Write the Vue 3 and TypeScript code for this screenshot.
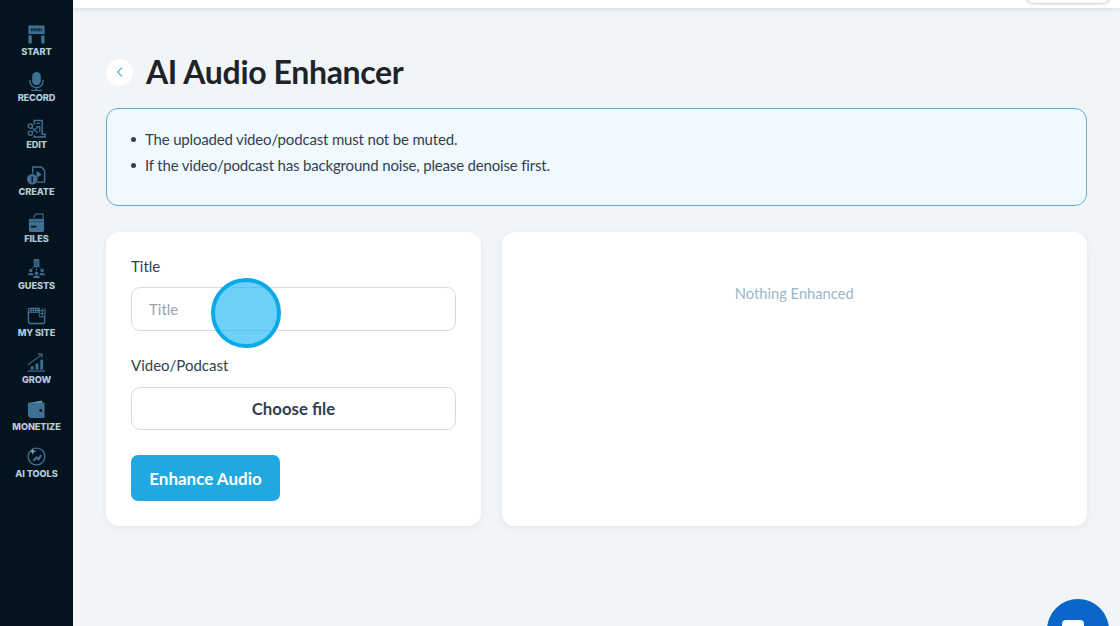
<script setup lang="ts">
interface NavItem { label: string; icon: string }
const nav: NavItem[] = [
  { label: 'START', icon: 'start' },
  { label: 'RECORD', icon: 'record' },
  { label: 'EDIT', icon: 'edit' },
  { label: 'CREATE', icon: 'create' },
  { label: 'FILES', icon: 'files' },
  { label: 'GUESTS', icon: 'guests' },
  { label: 'MY SITE', icon: 'site' },
  { label: 'GROW', icon: 'grow' },
  { label: 'MONETIZE', icon: 'monetize' },
  { label: 'AI TOOLS', icon: 'tools' },
]
</script>

<template>
  <div class="page">
    <aside class="sidebar">
      <div v-for="item in nav" :key="item.label" class="nav-item">
        <svg class="nav-icon" viewBox="0 0 20 20" width="20" height="20">
          <template v-if="item.icon === 'start'">
            <rect x="1.500" y="0.500" width="17" height="9" fill="#3f7093" />
            <rect x="1.500" y="11" width="3.500" height="8.500" fill="#3f7093" />
            <rect x="15" y="11" width="3.500" height="8.500" fill="#3f7093" />
            <path d="M4 5h12" stroke="#0f2c40" stroke-width="3" stroke-dasharray="2 .6" />
          </template>
          <template v-else-if="item.icon === 'record'">
            <rect x="5.500" y="0" width="9" height="14" rx="4.500" fill="#3f7093" />
            <path d="M3 8.500v1a7 7 0 0 0 14 0v-1" fill="none" stroke="#3f7093" stroke-width="1.400" />
            <path d="M10 16.500v2.500M4.500 19.300h11" stroke="#3f7093" stroke-width="1.400" />
          </template>
          <template v-else-if="item.icon === 'edit'">
            <path d="M7.500 6V1.500h8.500V16h3v3H7.500v-2" fill="none" stroke="#3f7093" stroke-width="1.500" />
            <path d="M10 4.500h3.500M10 8h3.500V14" fill="none" stroke="#3f7093" stroke-width="1.300" />
            <circle cx="3.500" cy="7.500" r="2.200" fill="none" stroke="#3f7093" stroke-width="1.400" />
            <circle cx="3.500" cy="15" r="2.200" fill="none" stroke="#3f7093" stroke-width="1.400" />
            <path d="M5.200 8.800l6.300 6M5.200 13.800l6.300-5.500" stroke="#3f7093" stroke-width="1.300" />
          </template>
          <template v-else-if="item.icon === 'create'">
            <path d="M6 8V1h9l3.500 3.500V17H10" fill="none" stroke="#3f7093" stroke-width="1.500" />
            <path d="M10 5l5.500 4-5.500 4z" fill="#3f7093" />
            <circle cx="5.500" cy="14" r="5.500" fill="#3f7093" />
            <rect x="4.700" y="11" width="1.600" height="6" fill="#04141f" />
          </template>
          <template v-else-if="item.icon === 'files'">
            <path d="M7 5l2-4h8v5" fill="none" stroke="#3f7093" stroke-width="1.200" />
            <rect x="2" y="6" width="16" height="14" rx="1.500" fill="#3f7093" />
            <rect x="4" y="13.500" width="6" height="1.800" fill="#04141f" />
            <path d="M2 9h16" stroke="#0f2c40" stroke-width="0.500" />
          </template>
          <template v-else-if="item.icon === 'guests'">
            <rect x="7" y="0" width="6" height="8.500" rx="1" fill="#3f7093" />
            <path d="M8 2.500h4M8 4.500h4M8 6.500h4" stroke="#0f2c40" stroke-width="0.600" />
            <circle cx="4" cy="12" r="1.800" fill="#3f7093" />
            <circle cx="16" cy="12" r="1.800" fill="#3f7093" />
            <circle cx="10" cy="15" r="1.800" fill="#3f7093" />
            <path d="M1 17c0-3 6-3 6 0zM13 17c0-3 6-3 6 0zM6.500 20c0-3.500 7-3.500 7 0z" fill="#3f7093" />
            <path d="M10 9v3.500M5 10l2-1.200M15 10l-2-1.200" stroke="#3f7093" stroke-width="0.900" />
          </template>
          <template v-else-if="item.icon === 'site'">
            <path d="M13 2.500H3a1.500 1.500 0 0 0-1.500 1.500v13A1.500 1.500 0 0 0 3 18.500h14a1.500 1.500 0 0 0 1.500-1.500v-6" fill="none" stroke="#3f7093" stroke-width="1.500" />
            <path d="M1.500 6.500H13" stroke="#3f7093" stroke-width="1.500" />
            <path d="M3.500 4.500h9" stroke="#7fa4bf" stroke-width="1.500" stroke-dasharray="1.500 1" />
            <path d="M13 2v9.500h6M16 2v9.500M13 5h6M13 8h6M19 2v9.500" stroke="#3f7093" stroke-width="1" fill="none" />
          </template>
          <template v-else-if="item.icon === 'grow'">
            <path d="M1 19h18" stroke="#3f7093" stroke-width="1.300" />
            <rect x="4" y="14" width="3" height="3.500" fill="#3f7093" />
            <rect x="9" y="11" width="3" height="6.500" fill="#3f7093" />
            <rect x="14" y="7" width="3" height="10.500" fill="#3f7093" />
            <path d="M1 12.500L15 2" stroke="#3f7093" stroke-width="1.200" />
            <path d="M11.500 1.200H15.800V5" fill="none" stroke="#3f7093" stroke-width="1.200" />
          </template>
          <template v-else-if="item.icon === 'monetize'">
            <path d="M1 3.500L16 .500v3z" fill="#6d94b0" />
            <path d="M1 3h17.500v16H5a4 4 0 0 1-4-4z" fill="#3f7093" />
            <circle cx="14.500" cy="11" r="1.500" fill="#04141f" />
          </template>
          <template v-else>
            <circle cx="10" cy="10" r="8.800" fill="none" stroke="#3f7093" stroke-width="1.400" />
            <path d="M6 0l1.200 3.300L10.500 4.500 7.200 5.700 6 9 4.800 5.700 1.500 4.500l3.300-1.200z" fill="#7fa4bf" stroke="#04141f" stroke-width="0.600" />
            <path d="M6.500 14.500l3.500-3.500 2 2 3-4.500" fill="none" stroke="#3f7093" stroke-width="2.200" />
          </template>
        </svg>
        <span class="nav-label">{{ item.label }}</span>
      </div>
    </aside>

    <div class="content">
      <header class="topbar"><div class="top-pill"></div></header>

      <main class="main">
        <div class="heading">
          <button class="back" type="button" aria-label="Back">
            <svg viewBox="0 0 10 12" width="10" height="12">
              <path d="M7 1.500L2.800 6 7 10.500" fill="none" stroke="#5fb4d3" stroke-width="1.200" />
            </svg>
          </button>
          <h1 class="title">AI Audio Enhancer</h1>
        </div>

        <section class="notice">
          <ul>
            <li>The uploaded video/podcast must not be muted.</li>
            <li>If the video/podcast has background noise, please denoise first.</li>
          </ul>
        </section>

        <div class="columns">
          <section class="card form-card">
            <label class="field-label">Title</label>
            <div class="input placeholder">Title</div>
            <label class="field-label second">Video/Podcast</label>
            <div class="input file">Choose file</div>
            <button class="submit" type="button">Enhance Audio</button>
          </section>
          <section class="card result-card">Nothing Enhanced</section>
        </div>
      </main>
    </div>

    <div class="pointer"></div>
    <div class="chat"><span class="chat-glyph"></span></div>
  </div>
</template>

<style>
html, body { margin: 0; padding: 0; overflow: hidden; }
</style>

<style scoped>
.page {
  position: relative;
  display: flex;
  width: 1120px;
  height: 626px;
  overflow: hidden;
  background: #f1f5f8;
  font-family: "Lato", "Open Sans", sans-serif;
  color: #333f50;
}
.sidebar {
  flex: 0 0 73px;
  display: flex;
  flex-direction: column;
  align-items: center;
  padding-top: 25px;
  box-sizing: border-box;
  background: #04141f;
}
.nav-item {
  height: 46.900px;
  display: flex;
  flex-direction: column;
  align-items: center;
}
.nav-icon { display: block; width: 19px; height: 19px; }
.nav-label {
  margin-top: 1.500px;
  font-family: "Inter", sans-serif;
  font-size: 9.200px;
  line-height: 12px;
  font-weight: 800;
  letter-spacing: -0.100px;
  white-space: nowrap;
  color: #b3cbdb;
}
.content {
  flex: 1;
  min-width: 0;
  display: flex;
  flex-direction: column;
}
.topbar {
  flex: 0 0 8px;
  height: 8px;
  min-height: 0;
  display: flex;
  justify-content: flex-end;
  align-items: flex-end;
  padding: 0 8px 4px 0;
  box-sizing: border-box;
  background: #fff;
  box-shadow: 0 1px 4px rgba(40, 60, 80, 0.16);
}
.top-pill {
  width: 88px;
  height: 10px;
  flex: none;
  box-sizing: border-box;
  border: 1px solid #d9d9d9;
  border-top: 0;
  border-radius: 0 0 10px 10px;
  box-shadow: 0 1px 2px rgba(0, 0, 0, 0.1);
}
.main {
  flex: 1;
  padding: 49px 33.500px 0 33px;
  display: flex;
  flex-direction: column;
}
.heading {
  display: flex;
  align-items: center;
  gap: 13px;
  height: 30px;
}
.back {
  width: 27px;
  height: 27px;
  padding: 0;
  border: 0;
  border-radius: 50%;
  background: #fff;
  display: flex;
  align-items: center;
  justify-content: center;
}
.title {
  margin: 0;
  font-size: 32px;
  line-height: 30px;
  font-weight: 700;
  color: #1d2329;
  letter-spacing: -0.350px;
}
.notice {
  margin-top: 21px;
  height: 98px;
  box-sizing: border-box;
  border: 1px solid #66aecb;
  border-radius: 12px;
  background: #f0fafe;
  padding: 17px 24px 0;
  font-size: 15px;
  letter-spacing: -0.170px;
  color: #333f50;
}
.notice ul { margin: 0; padding: 0; list-style: none; }
.notice li {
  display: flex;
  align-items: center;
  gap: 9px;
  height: 26px;
  line-height: 26px;
}
.notice li::before {
  content: "";
  flex: none;
  width: 5px;
  height: 5px;
  border-radius: 50%;
  background: #333f50;
}
.columns {
  margin-top: 26px;
  display: flex;
  gap: 21px;
  height: 294px;
}
.card {
  background: #fff;
  border-radius: 13px;
  box-sizing: border-box;
  box-shadow: 0 2px 6px rgba(40, 60, 80, 0.07);
}
.form-card {
  flex: 0 0 375px;
  padding: 24px 25px;
  display: flex;
  flex-direction: column;
}
.result-card {
  flex: 1;
  padding-top: 52px;
  text-align: center;
  font-size: 14.700px;
  line-height: 18px;
  color: #9bb7c8;
}
.field-label {
  font-size: 15px;
  line-height: 20px;
  color: #333f50;
}
.field-label.second { margin-top: 24px; }
.input {
  margin-top: 11px;
  height: 44px;
  box-sizing: border-box;
  border: 1px solid #d5dde3;
  border-radius: 9px;
  background: #fff;
  display: flex;
  align-items: center;
}
.placeholder {
  padding-left: 17px;
  font-size: 15px;
  color: #9aa5ad;
}
.file {
  margin-top: 12px;
  height: 43px;
  justify-content: center;
  font-size: 16.800px;
  font-weight: 700;
  color: #333f50;
}
.submit {
  align-self: flex-start;
  margin-top: 25px;
  width: 149px;
  height: 46px;
  padding: 0;
  border: 0;
  border-radius: 7px;
  background: #20a8e0;
  color: #fff;
  font-family: inherit;
  font-size: 17px;
  font-weight: 700;
}
.pointer {
  position: absolute;
  left: 211px;
  top: 278px;
  width: 70px;
  height: 70px;
  box-sizing: border-box;
  border: 4px solid #0aa9e8;
  border-radius: 50%;
  background: rgba(20, 180, 245, 0.62);
}
.chat {
  position: absolute;
  left: 1047px;
  top: 599px;
  width: 62px;
  height: 62px;
  border-radius: 50%;
  background: #0a66c8;
}
.chat-glyph {
  position: absolute;
  left: 15px;
  top: 21px;
  width: 22px;
  height: 20px;
  border-radius: 4px;
  background: #fff;
}
</style>
